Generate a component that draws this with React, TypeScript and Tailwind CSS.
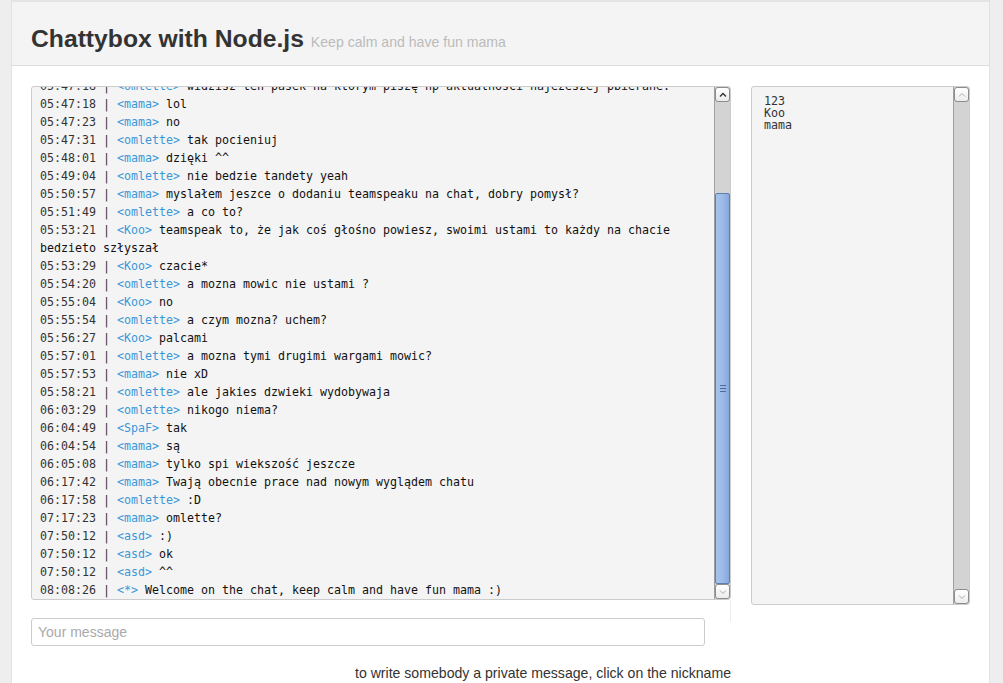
import React from "react";

type Msg = { t: string; n: string; m: string };

const messages: Msg[] = [
  { t: "05:47:18", n: "omlette", m: "widzisz ten pasek na którym piszę np aktualności najeżeszej pbierane." },
  { t: "05:47:18", n: "mama", m: "lol" },
  { t: "05:47:23", n: "mama", m: "no" },
  { t: "05:47:31", n: "omlette", m: "tak pocieniuj" },
  { t: "05:48:01", n: "mama", m: "dzięki ^^" },
  { t: "05:49:04", n: "omlette", m: "nie bedzie tandety yeah" },
  { t: "05:50:57", n: "mama", m: "myslałem jeszce o dodaniu teamspeaku na chat, dobry pomysł?" },
  { t: "05:51:49", n: "omlette", m: "a co to?" },
  { t: "05:53:21", n: "Koo", m: "teamspeak to, że jak coś głośno powiesz, swoimi ustami to każdy na chacie bedzieto szłyszał" },
  { t: "05:53:29", n: "Koo", m: "czacie*" },
  { t: "05:54:20", n: "omlette", m: "a mozna mowic nie ustami ?" },
  { t: "05:55:04", n: "Koo", m: "no" },
  { t: "05:55:54", n: "omlette", m: "a czym mozna? uchem?" },
  { t: "05:56:27", n: "Koo", m: "palcami" },
  { t: "05:57:01", n: "omlette", m: "a mozna tymi drugimi wargami mowic?" },
  { t: "05:57:53", n: "mama", m: "nie xD" },
  { t: "05:58:21", n: "omlette", m: "ale jakies dzwieki wydobywaja" },
  { t: "06:03:29", n: "omlette", m: "nikogo niema?" },
  { t: "06:04:49", n: "SpaF", m: "tak" },
  { t: "06:04:54", n: "mama", m: "są" },
  { t: "06:05:08", n: "mama", m: "tylko spi wiekszość jeszcze" },
  { t: "06:17:42", n: "mama", m: "Twają obecnie prace nad nowym wyglądem chatu" },
  { t: "06:17:58", n: "omlette", m: ":D" },
  { t: "07:17:23", n: "mama", m: "omlette?" },
  { t: "07:50:12", n: "asd", m: ":)" },
  { t: "07:50:12", n: "asd", m: "ok" },
  { t: "07:50:12", n: "asd", m: "^^" },
  { t: "08:08:26", n: "*", m: "Welcome on the chat, keep calm and have fun mama :)" },
];

const users = ["123", "Koo", "mama"];

const mono = { fontFamily: '"DejaVu Sans Mono", "Liberation Mono", monospace' };

function Chevron({ up, dark }: { up?: boolean; dark?: boolean }) {
  return (
    <svg width="8" height="6" viewBox="0 0 8 6">
      <path
        d={up ? "M1 4.5 L4 1.5 L7 4.5" : "M1 1.5 L4 4.5 L7 1.5"}
        fill="none"
        stroke={dark ? "#333" : "#aaa"}
        strokeWidth={dark ? 1.4 : 1}
      />
    </svg>
  );
}

function ScrollButton({ up, dark }: { up?: boolean; dark?: boolean }) {
  return (
    <div className="h-[15px] shrink-0 rounded-[3px] border border-[#8c8c8c] bg-gradient-to-b from-white to-[#ececec] flex items-center justify-center">
      <Chevron up={up} dark={dark} />
    </div>
  );
}

function Scrollbar({ thumbTop }: { thumbTop?: number }) {
  return (
    <div className="w-[16px] shrink-0 flex flex-col bg-[#d3d3d3] border-l border-[#a0a0a0]">
      <ScrollButton up dark={thumbTop !== undefined} />
      <div className="flex-1 flex flex-col">
        {thumbTop !== undefined && (
          <>
            <div style={{ height: thumbTop }} />
            <div className="flex-1 rounded-[2px] border border-[#5e7fb3] bg-gradient-to-r from-[#a6c3ec] via-[#9dbbe8] to-[#85a8dc] flex flex-col items-center justify-center gap-[2px]">
              <div className="w-[6px] h-[1px] bg-[#4b6b9e]" />
              <div className="w-[6px] h-[1px] bg-[#4b6b9e]" />
              <div className="w-[6px] h-[1px] bg-[#4b6b9e]" />
            </div>
          </>
        )}
      </div>
      <ScrollButton />
    </div>
  );
}

export default function App() {
  return (
    <div
      className="min-h-screen bg-[#eeeeee] flex"
      style={{ fontFamily: '"Liberation Sans", Arial, sans-serif' }}
    >
      <div className="ml-[11px] w-[979px] bg-white border-x border-[#e2e2e2] min-h-[683px]">
        {/* Header */}
        <header className="h-[66px] bg-[#f4f4f4] border-b border-[#dddddd] border-t-2 border-t-[#e4e4e4] px-[19px] pt-[19px]">
          <h1 className="text-[24.7px] font-bold text-[#333] leading-[36px]">
            Chattybox with Node.js{" "}
            <span className="text-[14.1px] font-normal text-[#bbbbbb]">Keep calm and have fun mama</span>
          </h1>
        </header>

        {/* Main */}
        <main className="flex gap-[20px] px-[19px] pt-[20px]">
          {/* Chat column */}
          <div className="w-[700px]">
            <div className="h-[514px] flex rounded-[3px] border border-[#cccccc] bg-[#f4f4f4] overflow-hidden">
              <div
                className="flex-1 flex flex-col justify-end overflow-hidden pl-[8px] pr-[6px] text-[11.63px] leading-[18px] text-[#333]"
                style={mono}
              >
                {messages.map((msg, i) => (
                  <div key={i} className="shrink-0">
                    {msg.t} | <span className="text-[#3a97d8]">&lt;{msg.n}&gt;</span>{" "}
                    <span className="text-[#111]">{msg.m}</span>
                  </div>
                ))}
              </div>
              <Scrollbar thumbTop={91} />
            </div>

            <div className="flex">
              <input
                className="mt-[18px] w-[675px] h-[28px] rounded-[3px] border border-[#cccccc] px-[6px] text-[14px] text-[#333] placeholder:text-[#aaaaaa] outline-none"
                placeholder="Your message"
              />
              <div className="ml-[25px] w-px h-[22px] bg-[#eeeeee]" />
            </div>

            <p className="mt-[17px] text-right text-[14.1px] text-[#333] leading-[20px]">
              to write somebody a private message, click on the nickname
            </p>
          </div>

          {/* Users column */}
          <div className="w-[220px]">
            <div className="h-[519px] flex rounded-[3px] border border-[#cccccc] bg-[#f4f4f4] overflow-hidden">
              <div className="flex-1 pl-[12px] pt-[8px] text-[11.63px] leading-[12px] text-[#333]" style={mono}>
                {users.map((u) => (
                  <div key={u}>{u}</div>
                ))}
              </div>
              <Scrollbar />
            </div>
          </div>
        </main>
      </div>
    </div>
  );
}
